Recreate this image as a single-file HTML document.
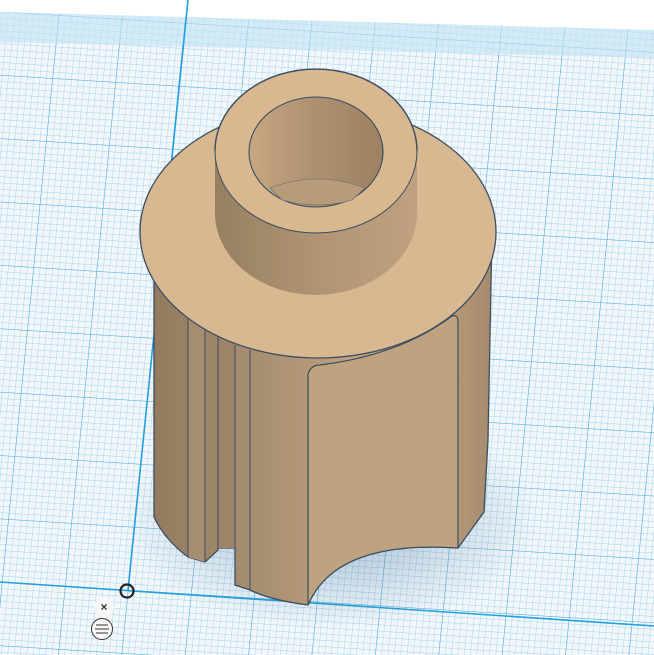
<!DOCTYPE html>
<html><head><meta charset="utf-8"><style>
html,body{margin:0;padding:0;width:654px;height:655px;overflow:hidden;background:#fff}
svg{display:block}
</style></head><body>
<svg width="654" height="655" viewBox="0 0 654 655" xmlns="http://www.w3.org/2000/svg">
<defs>
<pattern id="minor" width="6.3" height="6.3" patternUnits="userSpaceOnUse" patternTransform="matrix(1 0.062 -0.1 1 128 590)">
<rect width="6.3" height="6.3" fill="#f3f7fa"/>
<path d="M0 0H6.3M0 0V6.3" stroke="#9fd3ee" stroke-width="0.9" fill="none"/>
</pattern>
<pattern id="major" width="63" height="63" patternUnits="userSpaceOnUse" patternTransform="matrix(1 0.062 -0.1 1 128 590)">
<path d="M0 0H63M0 0V63" stroke="#4aaee0" stroke-width="1.1" fill="none"/>
</pattern>
<linearGradient id="body" x1="0" x2="1" y1="0" y2="0">
<stop offset="0" stop-color="#947b5f"/>
<stop offset="0.35" stop-color="#ab9173"/>
<stop offset="0.6" stop-color="#c0a27f"/>
<stop offset="0.85" stop-color="#b99c7b"/>
<stop offset="1" stop-color="#a58b6d"/>
</linearGradient>
<linearGradient id="ring" x1="0" x2="1">
<stop offset="0" stop-color="#96805f"/>
<stop offset="0.5" stop-color="#b09474"/>
<stop offset="1" stop-color="#bfa17f"/>
</linearGradient>
<linearGradient id="hole" x1="0" x2="1">
<stop offset="0" stop-color="#c6a783"/>
<stop offset="0.5" stop-color="#ad9070"/>
<stop offset="1" stop-color="#9c8162"/>
</linearGradient>
<radialGradient id="shadow" cx="0.5" cy="0.5" r="0.5">
<stop offset="0" stop-color="#3c6e94" stop-opacity="0.45"/>
<stop offset="1" stop-color="#3c6e94" stop-opacity="0"/>
</radialGradient>
</defs>
<rect width="654" height="655" fill="url(#minor)"/>
<rect width="654" height="655" fill="url(#major)"/>
<path d="M0 0H654V30L0 12Z" fill="#fff"/>
<path d="M0 12L654 30V58L0 42Z" fill="#bfe3f3" opacity="0.6"/>
<line x1="188" y1="0" x2="128" y2="590" stroke="#22a1de" stroke-width="1.6"/>
<line x1="0" y1="582" x2="654" y2="626" stroke="#22a1de" stroke-width="1.6"/>
<ellipse cx="330" cy="520" rx="210" ry="110" fill="url(#shadow)"/>
<!-- body -->
<path d="M154 232 L492 232 L488 440 L484 512 L458 548 C 370 542 325 565 308 605 Q270 600 250 590 L235 585 L235 548 L218 548 L218 550 L205 562 L188 557 Q165 540 154 517 Z" fill="url(#body)" stroke="#3b4e62" stroke-width="1.3"/>
<path d="M218 330 L235 340 V548 L218 548Z" fill="#9d8367"/>
<path d="M188 310 L205 320 V562 L188 557Z" fill="#a78d70"/>
<path d="M188 310 V557 M205 320 V562 M218 330 V550 M235 345 V585 M250 350 V590" stroke="#3b4e62" stroke-width="1" fill="none"/>
<path d="M308 605 V375 Q310 365 320 365 Q400 355 452 316 Q458 314 458 322 V548 C 370 542 325 565 308 605 Z" stroke="#3b4e62" stroke-width="1.2" fill="#bfa27f"/>
<!-- top disc -->
<ellipse cx="318" cy="232" rx="178" ry="126" fill="#d8b890" stroke="#3b4e62" stroke-width="1.3"/>
<!-- ring side -->
<path d="M215 151 V213 A101 82 0 0 0 417 213 V151 Z" fill="url(#ring)"/>
<ellipse cx="316" cy="151" rx="101" ry="82" fill="#d9b78f" stroke="#3b4e62" stroke-width="1"/>
<path d="M215 151 A101 82 0 0 1 417 151" fill="none" stroke="#3b4e62" stroke-width="1.4"/>
<!-- hole -->
<ellipse cx="316" cy="152" rx="67" ry="55" fill="url(#hole)" stroke="#3b4e62" stroke-width="1.1"/>
<path d="M270 188 Q318 170 365 188 L352 200 Q318 210 282 200Z" fill="#b89b79" stroke="#5a6a7a" stroke-width="0.6"/>
<!-- controls -->
<circle cx="127" cy="591" r="6.5" fill="none" stroke="#222" stroke-width="2.2"/>
<circle cx="104" cy="607" r="10" fill="#f7f7f7"/>
<text x="104" y="611" font-family="Liberation Sans, sans-serif" font-size="12" font-weight="bold" text-anchor="middle" fill="#333">×</text>
<circle cx="102" cy="629" r="10.5" fill="#f7f7f7" stroke="#333" stroke-width="1"/>
<path d="M96 625H108M95 629H109M96 633H108" stroke="#333" stroke-width="1"/>
</svg>
</body></html>
